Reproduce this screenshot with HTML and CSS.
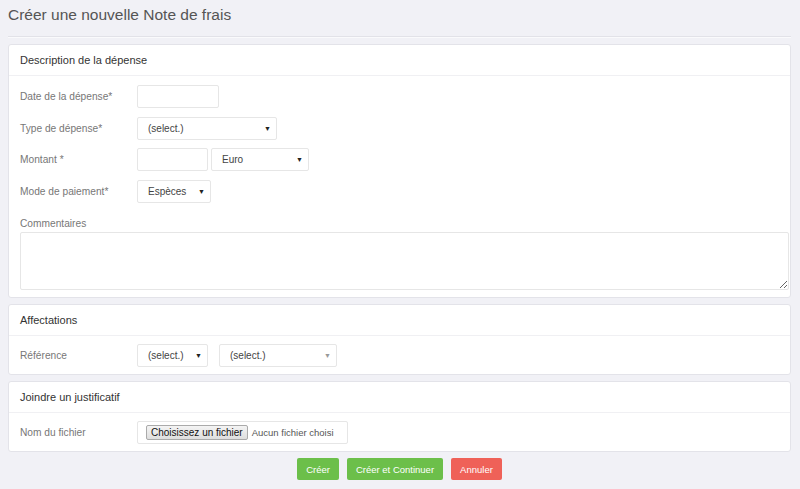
FILE: index.html
```html
<!DOCTYPE html>
<html lang="fr">
<head>
  <meta charset="UTF-8" />
  <title>Créer une nouvelle Note de frais</title>
  <link rel="stylesheet" href="styles.css">
</head>
<body>
  <!-- Title -->
  <h2 class="page-title">Créer une nouvelle Note de frais</h2>

  <!-- Description -->
  <div class="panel">
    <div class="panel-head">Description de la dépense</div>
    <div class="panel-body">
      <div class="form-row">
        <label class="label">Date de la dépense*</label>
        <div class="field w-date"></div>
      </div>
      <div class="form-row">
        <label class="label">Type de dépense*</label>
        <div class="field select w-type"><span>(select.)</span><span class="arrow">▼</span></div>
      </div>
      <div class="form-row">
        <label class="label">Montant *</label>
        <div class="field w-amount"></div>
        <div class="field select w-currency"><span>Euro</span><span class="arrow">▼</span></div>
      </div>
      <div class="form-row">
        <label class="label">Mode de paiement*</label>
        <div class="field select w-mode"><span>Espèces</span><span class="arrow">▼</span></div>
      </div>
      <div class="comment-block">
        <label class="label">Commentaires</label>
        <textarea class="comments"></textarea>
      </div>
    </div>
  </div>

  <!-- Affectations -->
  <div class="panel">
    <div class="panel-head">Affectations</div>
    <div class="panel-body">
      <div class="form-row">
        <label class="label">Référence</label>
        <div class="field select w-ref"><span>(select.)</span><span class="arrow">▼</span></div>
        <div class="field select w-ref2 gap-lg"><span>(select.)</span><span class="arrow light">▼</span></div>
      </div>
    </div>
  </div>

  <!-- Justificatif -->
  <div class="panel">
    <div class="panel-head">Joindre un justificatif</div>
    <div class="panel-body">
      <div class="form-row">
        <label class="label">Nom du fichier</label>
        <div class="field file-field">
          <span class="file-btn">Choisissez un fichier</span>
          <span class="file-name">Aucun fichier choisi</span>
        </div>
      </div>
    </div>
  </div>

  <!-- Buttons -->
  <div class="actions">
    <button class="btn green">Créer</button>
    <button class="btn green">Créer et Continuer</button>
    <button class="btn red">Annuler</button>
  </div>
</body>
</html>
```

FILE: styles.css
```css
* {
  margin: 0;
  padding: 0;
  box-sizing: border-box;
  font-family: 'Liberation Sans', Arial, sans-serif;
}

html, body {
  width: 800px;
  height: 489px;
  background: #f1f1f6;
  overflow: hidden;
}

body {
  padding: 0 9px 0 8px;
}

.page-title {
  font-size: 15.5px;
  font-weight: normal;
  color: #555;
  height: 37px;
  padding-top: 6px;
  border-bottom: 1px solid #e2e2e8;
  box-shadow: 0 1px 0 #fafafc;
  margin-bottom: 7px;
}

.panel {
  background: white;
  border: 1px solid #e3e3e9;
  border-radius: 3px;
  margin-bottom: 6px;
}

.panel-head {
  height: 31px;
  line-height: 30px;
  padding-left: 11px;
  font-size: 11px;
  color: #333;
  border-bottom: 1px solid #f0f0f3;
}

.panel-body {
  padding: 8px 1px 7px 11px;
  display: flex;
  flex-direction: column;
  gap: 8.5px;
}

.panel:first-of-type .panel-body {
  padding-top: 9px;
}

.form-row {
  display: flex;
  align-items: center;
  gap: 4px;
}

.label {
  width: 113px;
  font-size: 10.2px;
  color: #777;
}

.field {
  height: 23px;
  border: 1px solid #e6e6e6;
  border-radius: 2px;
  background: white;
  font-size: 10px;
  color: #444;
}

.select {
  display: flex;
  align-items: center;
  justify-content: space-between;
  padding: 0 5px 0 10px;
}

.arrow {
  font-size: 7px;
  color: #222;
}

.arrow.light {
  color: #999;
}

.w-date { width: 82px; }
.w-type { width: 140px; }
.w-amount { width: 71px; }
.w-currency { width: 98px; margin-left: -1px; }
.w-mode { width: 74px; }
.w-ref { width: 71px; }
.w-ref2 { width: 118px; }
.gap-lg { margin-left: 7px; }

.comment-block {
  display: flex;
  flex-direction: column;
  gap: 3px;
  margin-top: 7px;
}

.comments {
  width: 100%;
  height: 58px;
  border: 1px solid #e6e6e6;
  border-radius: 2px;
  resize: vertical;
}

.file-field {
  width: 211px;
  display: flex;
  align-items: center;
  gap: 4px;
  padding-left: 8px;
}

.file-btn {
  font-size: 10px;
  color: #111;
  background: linear-gradient(#f4f4f4, #dedede);
  border: 1px solid #aaa;
  border-radius: 2px;
  padding: 1px 4px;
}

.file-name {
  font-size: 9.5px;
  color: #555;
}

.actions {
  display: flex;
  justify-content: center;
  gap: 8px;
}

.btn {
  height: 22px;
  padding: 0 9px;
  border: none;
  border-radius: 2px;
  font-size: 9.5px;
  color: white;
  cursor: pointer;
}

.btn.green {
  background: #6cbf4a;
}

.btn.red {
  background: #ef6158;
}
```
